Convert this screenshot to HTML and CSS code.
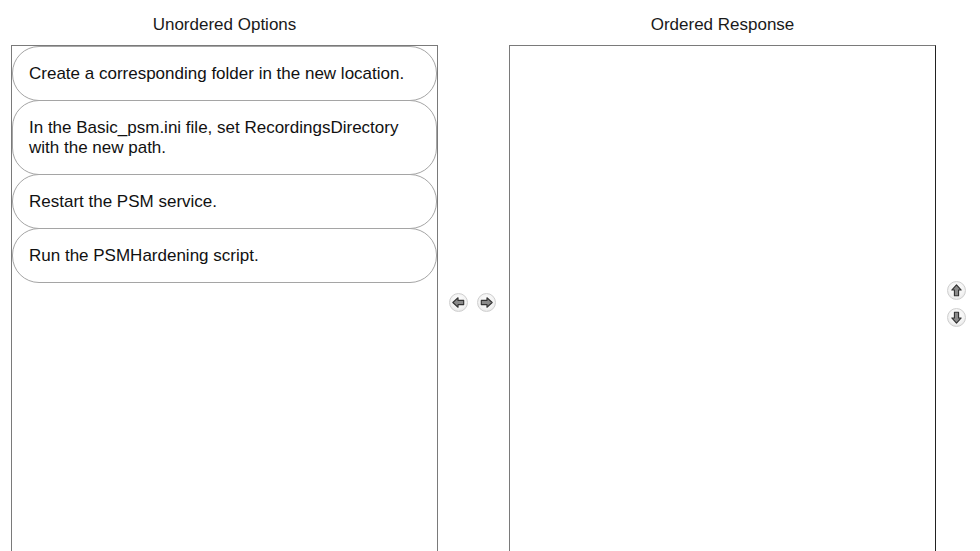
FILE: index.html
```html
<!DOCTYPE html>
<html lang="en">
<head>
    <meta charset="UTF-8">
    <title>Drag and Drop Ordering</title>
    <link rel="stylesheet" href="styles.css">
</head>
<body>
    <div class="board">
        <div class="column">
            <div class="column-title">Unordered Options</div>
            <div class="list-box">
                <div class="option">Create a corresponding folder in the new location.</div>
                <div class="option">In the Basic_psm.ini file, set RecordingsDirectory with the new path.</div>
                <div class="option">Restart the PSM service.</div>
                <div class="option">Run the PSMHardening script.</div>
            </div>
        </div>

        <div class="move-controls">
            <button class="round-btn" title="Move left">
                <svg viewBox="0 0 18 18"><path d="M3 9 L8.5 4 L8.5 6.8 L14.5 6.8 L14.5 11.2 L8.5 11.2 L8.5 14 Z"/></svg>
            </button>
            <button class="round-btn" title="Move right">
                <svg viewBox="0 0 18 18"><path d="M15 9 L9.5 4 L9.5 6.8 L3.5 6.8 L3.5 11.2 L9.5 11.2 L9.5 14 Z"/></svg>
            </button>
        </div>

        <div class="column">
            <div class="column-title">Ordered Response</div>
            <div class="list-box response"></div>
        </div>

        <div class="order-controls">
            <button class="round-btn" title="Move up">
                <svg viewBox="0 0 18 18"><path d="M9 3 L4 8.5 L6.8 8.5 L6.8 14.5 L11.2 14.5 L11.2 8.5 L14 8.5 Z"/></svg>
            </button>
            <button class="round-btn" title="Move down">
                <svg viewBox="0 0 18 18"><path d="M9 15 L4 9.5 L6.8 9.5 L6.8 3.5 L11.2 3.5 L11.2 9.5 L14 9.5 Z"/></svg>
            </button>
        </div>
    </div>
</body>
</html>
```

FILE: styles.css
```css
body {
    margin: 0;
    background: #ffffff;
    font-family: "Liberation Sans", Arial, sans-serif;
    color: #111;
    overflow: hidden;
}
.board {
    display: flex;
    align-items: flex-start;
    padding-left: 11px;
}
.column {
    width: 427px;
}
.column-title {
    height: 45px;
    line-height: 50px;
    text-align: center;
    font-size: 17px;
    color: #1a1a1a;
}
.list-box {
    box-sizing: border-box;
    height: 520px;
    border: 1px solid #7a7a7a;
    background: #fff;
}
.list-box.response {
    border-right-color: #222;
}
.option {
    padding: 17px 24px 16px 16px;
    font-size: 17px;
    line-height: 20px;
    border: 1px solid #a5a5a5;
    border-radius: 27px;
    background: #fff;
    margin-top: -1px;
}
.option:first-child {
    margin-top: 0;
}
.move-controls {
    width: 71px;
    height: 514px;
    margin-top: 45px;
    display: flex;
    align-items: center;
    justify-content: center;
    gap: 9px;
    padding-right: 2px;
    box-sizing: border-box;
}
.order-controls {
    box-sizing: border-box;
    width: 40px;
    height: 514px;
    margin-top: 45px;
    padding-top: 4px;
    display: flex;
    flex-direction: column;
    align-items: center;
    justify-content: center;
    gap: 8px;
}
.round-btn {
    width: 19px;
    height: 19px;
    padding: 0;
    border: 1px solid #cfcfcf;
    border-radius: 50%;
    background: radial-gradient(circle at 50% 40%, #ffffff 0%, #f2f2f2 60%, #dadada 100%);
    display: flex;
    align-items: center;
    justify-content: center;
    cursor: pointer;
}
.round-btn svg {
    width: 17px;
    height: 17px;
}
.round-btn path {
    fill: #8a8a8a;
    stroke: #333;
    stroke-width: 1.2;
    stroke-linejoin: round;
}
```
